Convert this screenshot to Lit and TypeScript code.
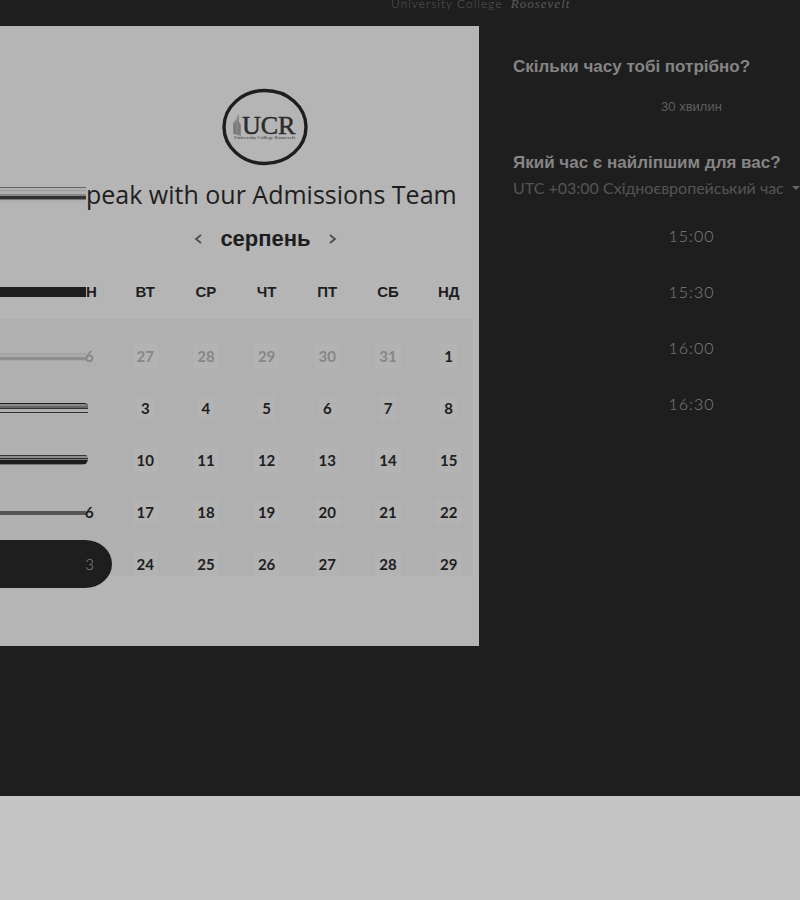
import { LitElement, html, css, svg } from "lit";
import { customElement, state } from "lit/decorators.js";

interface Week {
  lead: string;
  streak: string;
  days: number[];
}

const WEEKDAYS = ["ВТ", "СР", "ЧТ", "ПТ", "СБ", "НД"];

const WEEKS: Week[] = [
  { lead: "6", streak: "faded", days: [27, 28, 29, 30, 31, 1] },
  { lead: "", streak: "double", days: [3, 4, 5, 6, 7, 8] },
  { lead: "", streak: "heavy", days: [10, 11, 12, 13, 14, 15] },
  { lead: "6", streak: "single", days: [17, 18, 19, 20, 21, 22] },
  { lead: "3", streak: "selected", days: [24, 25, 26, 27, 28, 29] },
];

const TIMES = ["15:00", "15:30", "16:00", "16:30"];

@customElement("ucr-seal")
export class UcrSeal extends LitElement {
  static styles = css`
    :host {
      display: block;
    }
    .seal {
      display: block;
      width: 86px;
      height: 78px;
    }
    .letters {
      font: 26px "Liberation Serif", serif;
    }
    .caption {
      font: bold 5px "Liberation Serif", serif;
    }
  `;

  render() {
    return html`<svg class="seal" viewBox="0 0 86 78" role="img" aria-label="UCR">
      ${svg`
        <ellipse cx="43" cy="39" rx="41" ry="36.5" fill="none" stroke="#1e1e1e" stroke-width="3.4"/>
        <path d="M11 46V35l2-2 1-3 1 3v-4l1-3 1 3v6l2 2v11z" fill="#858585"/>
        <path d="M13 36v10M17 34v12" stroke="#6a6a6a" stroke-width=".7"/>
        <text class="letters" x="20" y="46" fill="#2b2b2b" stroke="#2b2b2b" stroke-width=".5">UCR</text>
        <text class="caption" x="12" y="51" fill="#5c5c5c">University College Roosevelt</text>
      `}
    </svg>`;
  }
}

@customElement("month-calendar")
export class MonthCalendar extends LitElement {
  static styles = css`
    :host {
      display: block;
    }
    .month {
      display: flex;
      justify-content: center;
      align-items: center;
      gap: 16px;
      height: 32px;
      padding-left: 52px;
    }
    .name {
      margin: 0;
      font: bold 22px/32px "Liberation Sans", sans-serif;
    }
    .step {
      display: grid;
      place-items: center;
      width: 12px;
      height: 24px;
      padding: 0;
      border: 0;
      background: none;
      color: #4c4c4c;
    }
    .days {
      width: 100%;
      margin-top: 10px;
      border-collapse: collapse;
      table-layout: fixed;
      background: linear-gradient(#b0b0b0, #b0b0b0) no-repeat 0 54px / calc(100% - 6px) 257px;
    }
    .first {
      width: 24%;
    }
    .days th {
      height: 54px;
      padding: 0 0 11px;
      font: bold 15px/20px "Liberation Sans", sans-serif;
    }
    .days td {
      height: 52px;
      padding: 0;
      text-align: center;
    }
    .day {
      padding: 4px;
      border: 0;
      background: #b3b3b3;
      color: inherit;
      font: bold 15px/16px Lato, sans-serif;
    }
    .other {
      color: #878787;
    }
    .lead {
      display: flex;
      align-items: center;
      height: 20px;
    }
    .streak {
      flex: none;
      width: 86px;
      height: 10px;
    }
    .solid {
      background: #1e1e1e;
    }
    .faded {
      background: linear-gradient(#b0b0b0 2px, #a4a4a4 2px 4px, #acacac 4px 6px, #8f8f8f 6px 9px, #a8a8a8 9px);
    }
    .double {
      width: 88px;
      height: 8px;
      border-top: 1px solid #1e1e1e;
      border-bottom: 1px solid #303030;
      border-top-right-radius: 4px;
      background: linear-gradient(#8a8a8a 2px, #666 2px 4px, #333 4px 5px, #b0b0b0 5px);
    }
    .heavy {
      width: 88px;
      border-radius: 0 3px 6px 0;
      background: linear-gradient(#333 1px, #8c8c8c 1px 3px, #333 3px 4px, #777 4px 5px, #1e1e1e 5px 9px, #777 9px);
    }
    .single {
      background: linear-gradient(#b0b0b0 4px, #555 4px 8px, #b0b0b0 8px);
    }
    .lead .day {
      margin-left: -1px;
      padding: 0;
      background: none;
    }
    .lead.selected {
      justify-content: flex-end;
      width: 112px;
      height: 48px;
      box-sizing: border-box;
      padding-right: 18px;
      border-radius: 0 27px 27px 0 / 0 24px 24px 0;
      background: #1e1e1e;
      color: #8a8a8a;
    }
    .selected .day {
      font-weight: 300;
    }
  `;

  private arrow(path: string) {
    return html`<svg width="8" height="10" viewBox="0 0 8 10" aria-hidden="true">
      <path d=${path} fill="none" stroke="currentColor" stroke-width="1.8" />
    </svg>`;
  }

  private lead(week: Week) {
    if (week.streak === "selected") {
      return html`<div class="lead selected"><button class="day" aria-pressed="true">${week.lead}</button></div>`;
    }
    return html`<div class="lead">
      <div class="streak ${week.streak}"></div>
      ${week.lead
        ? html`<button class="day ${week.streak === "faded" ? "other" : ""}">${week.lead}</button>`
        : ""}
    </div>`;
  }

  render() {
    return html`
      <div class="month">
        <button class="step" aria-label="Попередній місяць">${this.arrow("M7 1 2 5 7 9")}</button>
        <h2 class="name">серпень</h2>
        <button class="step" aria-label="Наступний місяць">${this.arrow("M1 1 6 5 1 9")}</button>
      </div>
      <table class="days">
        <thead>
          <tr>
            <th class="first" scope="col">
              <div class="lead"><div class="streak solid"></div>Н</div>
            </th>
            ${WEEKDAYS.map((d) => html`<th scope="col">${d}</th>`)}
          </tr>
        </thead>
        <tbody>
          ${WEEKS.map(
            (week) => html`<tr>
              <td>${this.lead(week)}</td>
              ${week.days.map(
                (d) => html`<td>
                  <button class="day ${week.streak === "faded" && d > 20 ? "other" : ""}">${d}</button>
                </td>`
              )}
            </tr>`
          )}
        </tbody>
      </table>
    `;
  }
}

@customElement("app-root")
export class AppRoot extends LitElement {
  static styles = css`
    :host {
      display: block;
      min-height: 100vh;
      background: #c5c5c5;
      color: #1e1e1e;
      font-family: Lato, "Liberation Sans", sans-serif;
    }
    .page {
      padding-bottom: 150px;
      background: #1e1e1e;
      overflow: hidden;
    }
    .brand {
      height: 26px;
      margin: 0;
      padding-left: 391px;
      color: #5c5c5c;
      font: 300 12px/8px Lato, sans-serif;
      letter-spacing: 1px;
      white-space: nowrap;
      box-sizing: border-box;
    }
    .brand em {
      margin-left: 4px;
      font: italic 13px/8px "Liberation Serif", serif;
    }
    .columns {
      display: grid;
      grid-template-columns: minmax(0, 479fr) minmax(0, 321fr);
    }
    .card {
      padding: 62px 0 56px;
      background: #b5b5b5;
    }
    .seal {
      display: flex;
      justify-content: center;
      padding-left: 50px;
    }
    .title {
      display: flex;
      align-items: center;
      height: 57px;
      margin: 0;
      font: 25px/57px "Open Sans", sans-serif;
      white-space: nowrap;
    }
    .smear {
      flex: none;
      width: 86px;
      height: 16px;
      background: linear-gradient(#666 1px, #b0b0b0 1px 3px, #9c9c9c 3px 4px, #b0b0b0 4px 7px, #888 7px 9px, #333 9px 12px, #777 12px 13px, #b0b0b0 13px);
    }
    .side {
      padding: 30px 0 0 34px;
      color: #858585;
    }
    .question {
      margin: 0;
      font: bold 17px/22px "Liberation Sans", sans-serif;
      white-space: nowrap;
    }
    .choice {
      display: block;
      width: 100%;
      padding: 0 0 0 70px;
      border: 0;
      background: none;
      color: #5e5e5e;
      text-align: center;
    }
    .duration {
      height: 74px;
      padding-bottom: 16px;
      font: 13px/16px "Liberation Sans", sans-serif;
    }
    .zone-row {
      display: flex;
      align-items: center;
      height: 28px;
    }
    .zone {
      appearance: none;
      flex: none;
      padding: 0;
      border: 0;
      background: none;
      color: #555;
      font: 16px/20px Lato, "Liberation Sans", sans-serif;
    }
    .caret {
      flex: none;
      margin-left: 8px;
      color: #666;
    }
    .times {
      display: grid;
      gap: 32px;
      margin: 22px 0 0;
      padding: 0;
      list-style: none;
    }
    .time {
      color: #808080;
      font: 300 16px/24px Lato, sans-serif;
      letter-spacing: 1px;
    }
  `;

  @state() private time = "";

  render() {
    return html`
      <main class="page">
        <p class="brand">University College <em>Roosevelt</em></p>
        <div class="columns">
          <section class="card">
            <div class="seal"><ucr-seal></ucr-seal></div>
            <h1 class="title"><span class="smear"></span>peak with our Admissions Team</h1>
            <month-calendar></month-calendar>
          </section>
          <section class="side">
            <h2 class="question">Скільки часу тобі потрібно?</h2>
            <button class="choice duration">30 хвилин</button>
            <h2 class="question"><label for="zone">Який час є найліпшим для вас?</label></h2>
            <div class="zone-row">
              <select class="zone" id="zone">
                <option>UTC +03:00 Східноєвропейський час</option>
              </select>
              <svg class="caret" width="8" height="6" viewBox="0 0 8 6" aria-hidden="true">
                <path d="M0 1h8L4 5z" fill="currentColor" />
              </svg>
            </div>
            <ul class="times">
              ${TIMES.map(
                (t) => html`<li>
                  <button class="choice time" aria-pressed=${this.time === t} @click=${() => (this.time = t)}>${t}</button>
                </li>`
              )}
            </ul>
          </section>
        </div>
      </main>
    `;
  }
}
